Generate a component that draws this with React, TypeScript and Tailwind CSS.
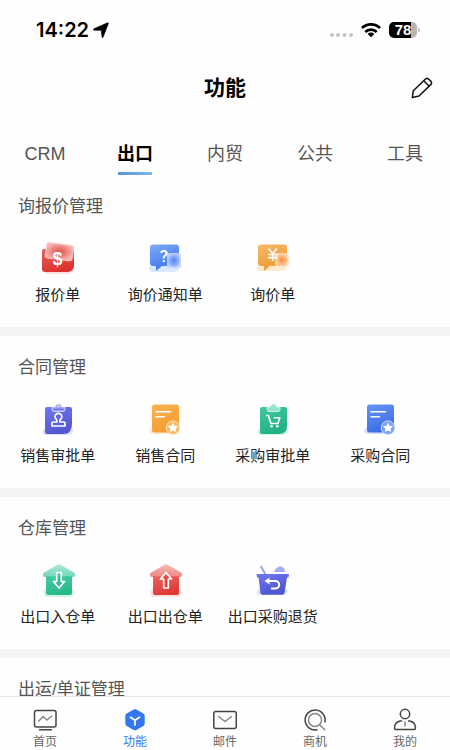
import { useState, type ReactNode } from "react";

interface Feature {
  label: string;
  icon: ReactNode;
}

interface FeatureGroup {
  title: string;
  features: Feature[];
}

const TABS = ["CRM", "出口", "内贸", "公共", "工具"];

function FeatureSvg({ children }: { children: ReactNode }) {
  return (
    <svg viewBox="0 0 36 36" className="size-9" aria-hidden="true">
      {children}
    </svg>
  );
}

function Gradient({ id, from, to }: { id: string; from: string; to: string }) {
  return (
    <linearGradient id={id} x1="0" y1="0" x2="0.4" y2="1">
      <stop offset="0" stopColor={from} />
      <stop offset="1" stopColor={to} />
    </linearGradient>
  );
}

function QuoteIcon() {
  return (
    <FeatureSvg>
      <defs>
        <Gradient id="quote" from="#e2605c" to="#dc3331" />
        <radialGradient id="quote-glass">
          <stop offset="0" stopColor="#e4504d" />
          <stop offset="0.5" stopColor="#ec7f7b" />
          <stop offset="1" stopColor="#f8b9b5" />
        </radialGradient>
      </defs>
      <path d="M5 27h27c3 0 1 6-5 6H8c-4 0-6-6-3-6Z" fill="#fbdedb" />
      <path d="M4 8h27q3 0 3 3v13q0 7-7 7H5q-3 0-3-3V10q0-2 2-2Z" fill="url(#quote)" />
      <path
        d="M9 1.6 31.5 4.5q2.5.4 2.2 2.8l-1.4 10.4q-.4 2.6-3 2.3L7 17q-2.4-.4-2-2.6L6.8 3.3Q7.1 1.4 9 1.6Z"
        fill="url(#quote-glass)"
        stroke="#f9c8c4"
        strokeWidth="0.8"
      />
      <text x="17.5" y="24" textAnchor="middle" fontSize="18" fontWeight="700" fill="#fff" className="font-['Liberation_Sans',sans-serif]">
        $
      </text>
    </FeatureSvg>
  );
}

function InquiryNoticeIcon() {
  return (
    <FeatureSvg>
      <defs>
        <Gradient id="notice" from="#82abf4" to="#3f77ec" />
        <radialGradient id="notice-glass">
          <stop offset="0" stopColor="#5385f3" />
          <stop offset="0.5" stopColor="#84a8f8" />
          <stop offset="1" stopColor="#c4d6fd" />
        </radialGradient>
      </defs>
      <path d="M5 24h27v3c0 3-3 4-6 4H6c-6 0-5-6-1-7Z" fill="#dbe7fd" />
      <path d="M6 3.5h23q3 0 3 3V22q0 3-3 3H15l-6 5V25H6q-3 0-3-3V6.500q0-3 3-3Z" fill="url(#notice)" />
      <rect x="20" y="12" width="14" height="15" rx="2" fill="url(#notice-glass)" fillOpacity="0.9" />
      <text x="17" y="21" textAnchor="middle" fontSize="17" fontWeight="500" fill="#fff" className="font-['Roboto',sans-serif]">
        ?
      </text>
    </FeatureSvg>
  );
}

function InquiryIcon() {
  return (
    <FeatureSvg>
      <defs>
        <Gradient id="inquiry" from="#f6b868" to="#ee9a32" />
        <radialGradient id="inquiry-glass">
          <stop offset="0" stopColor="#f58c3c" />
          <stop offset="0.5" stopColor="#f9b277" />
          <stop offset="1" stopColor="#fde0c0" stopOpacity="0.8" />
        </radialGradient>
      </defs>
      <path d="M4 24h27v3c0 2-3 3-6 3H5c-4 0-4-5-1-6Z" fill="#fdebd0" />
      <path d="M6 3.5h23q3 0 3 3V22q0 3-3 3H15l-6 5V25H6q-3 0-3-3V6.500q0-3 3-3Z" fill="url(#inquiry)" />
      <rect x="20" y="12" width="14" height="14" rx="3" fill="url(#inquiry-glass)" />
      <path d="m13.500 7.500 4.200 5 4.200-5M17.700 12.500v7.500M13 13.500h9.500M13 16.700h9.500" fill="none" stroke="#fff" strokeWidth="1.700" />
    </FeatureSvg>
  );
}

function StampClipboardIcon() {
  return (
    <FeatureSvg>
      <defs>
        <Gradient id="stamp" from="#6f78ee" to="#5457cf" />
      </defs>
      <path d="M4 27h28c3 1 0 6-4 6H6c-4 0-5-5-2-6Z" fill="#dfe1fa" />
      <path d="M7 5h23q2 0 2 2v15q0 10-9 10H7q-2 0-2-2V7q0-2 2-2Z" fill="url(#stamp)" />
      <path d="M12 5h3.500q.5-3 3-3t3 3H25v2.500q0 2-2 2h-9q-2 0-2-2Z" fill="#9aa0f2" stroke="#d3d6fb" strokeWidth="0.9" />
      <path d="M13.500 7.300h10" stroke="#6a70e2" strokeWidth="1.200" />
      <circle cx="18.500" cy="4.300" r="0.900" fill="#fff" />
      <path
        d="M16.800 20v-1.800c0-1-1.800-1.500-1.800-3.400a3.400 3.400 0 0 1 6.800 0c0 1.900-1.800 2.400-1.800 3.400V20h4q1 0 1 1v3H12v-3q0-1 1-1Z"
        fill="none"
        stroke="#fff"
        strokeWidth="1.700"
      />
    </FeatureSvg>
  );
}

function ContractIcon({ id, from, to, glow, badge }: { id: string; from: string; to: string; glow: string; badge: string }) {
  return (
    <FeatureSvg>
      <defs>
        <Gradient id={id} from={from} to={to} />
      </defs>
      <path d="M4 26h28v3c0 2-2 3-4 3H6c-5 0-5-5-2-6Z" fill={glow} />
      <rect x="5" y="2.500" width="27" height="28" rx="2.500" fill={`url(#${id})`} />
      <path d="M9 9.700h14.500M9 14.700h8.500" stroke="#fff" strokeWidth="1.500" strokeLinecap="round" />
      <circle cx="26" cy="25.700" r="6.800" fill={badge} stroke={glow} strokeWidth="0.900" />
      <path d="m26 20.800 1.600 3 3.400.5-2.500 2.400.6 3.400-3.100-1.600-3.100 1.600.6-3.400-2.500-2.400 3.400-.5Z" fill="#fff" />
    </FeatureSvg>
  );
}

function CartClipboardIcon() {
  return (
    <FeatureSvg>
      <defs>
        <Gradient id="cart" from="#43c7a0" to="#22b184" />
      </defs>
      <path d="M4 27h28c3 1 0 6-4 6H6c-4 0-5-5-2-6Z" fill="#d3f6ea" />
      <path d="M7 5h23q2 0 2 2v17q0 8-8 8H7q-2 0-2-2V7q0-2 2-2Z" fill="url(#cart)" />
      <path d="M12 5h3.500q.5-3 3-3t3 3H25v2.500q0 2-2 2h-9q-2 0-2-2Z" fill="#93e2ca" stroke="#d5f7ed" strokeWidth="0.9" />
      <path d="M11 13.500h2.500l2.300 8h7.200l1.800-5.800h-6" fill="none" stroke="#fff" strokeWidth="1.600" strokeLinejoin="round" />
      <circle cx="16.500" cy="24.300" r="1.300" fill="#fff" />
      <circle cx="22.300" cy="24.300" r="1.300" fill="#fff" />
    </FeatureSvg>
  );
}

function WarehouseIcon({ id, from, to, roof, glow, out }: { id: string; from: string; to: string; roof: string; glow: string; out?: boolean }) {
  return (
    <FeatureSvg>
      <defs>
        <Gradient id={id} from={from} to={to} />
        <linearGradient id={`${id}-roof`} x1="0" y1="0" x2="0" y2="1">
          <stop offset="0" stopColor={roof} />
          <stop offset="1" stopColor={from} stopOpacity="0.75" />
        </linearGradient>
      </defs>
      <path d="M5 26h28c2 1 2 8-3 8H7c-4 0-5-6-2-8Z" fill={glow} />
      <path d="M6 13h26v17q0 2-2 2H8q-2 0-2-2Z" fill={`url(#${id})`} />
      <path d="M17.500 1.800q1.500-1 3 0L34 9.500q1.200.8 1.200 2.500 0 2-2 2H4.800q-2 0-2-2 0-1.700 1.200-2.500Z" fill={`url(#${id}-roof)`} />
      <path
        d={out ? "M19 9.500 24.500 16h-3.200v9h-4.600v-9h-3.200Z" : "M16.700 9.500h4.600v9h3.200L19 25l-5.500-6.500h3.200Z"}
        fill={to}
        fillOpacity="0.55"
        stroke="#fff"
        strokeWidth="1.700"
        strokeLinejoin="round"
      />
    </FeatureSvg>
  );
}

function ReturnBasketIcon() {
  return (
    <FeatureSvg>
      <defs>
        <Gradient id="basket" from="#6d78ee" to="#5055d2" />
      </defs>
      <path d="M4 26h27c3 1 1 6-3 6H5c-4 0-4-5-1-6Z" fill="#dcdffa" />
      <path d="m6 3.500 4 7" stroke="#9aa1f2" strokeWidth="2" strokeLinecap="round" />
      <path d="M19 9c1-3 3.500-5.500 6.500-5.500s4.500 2.500 4.500 5.500Z" fill="#a5abf4" />
      <path d="M1.500 11h32.500l-.5 3.500H32L29.500 30q-.3 1.800-2 1.800h-20q-1.700 0-2-1.800L3.500 14.500H2Z" fill="url(#basket)" />
      <path d="M12 18h8.500a3.700 3.700 0 0 1 0 7.400H16" fill="none" stroke="#fff" strokeWidth="2" />
      <path d="m9.500 18 5-3.500v7Z" fill="#fff" />
    </FeatureSvg>
  );
}

const GROUPS: FeatureGroup[] = [
  {
    title: "询报价管理",
    features: [
      { label: "报价单", icon: <QuoteIcon /> },
      { label: "询价通知单", icon: <InquiryNoticeIcon /> },
      { label: "询价单", icon: <InquiryIcon /> },
    ],
  },
  {
    title: "合同管理",
    features: [
      { label: "销售审批单", icon: <StampClipboardIcon /> },
      { label: "销售合同", icon: <ContractIcon id="sales" from="#f9b452" to="#f59c2f" glow="#fdeacb" badge="#f8bd6c" /> },
      { label: "采购审批单", icon: <CartClipboardIcon /> },
      { label: "采购合同", icon: <ContractIcon id="purchase" from="#6795f3" to="#3d6de6" glow="#d6e3fd" badge="#7da2f4" /> },
    ],
  },
  {
    title: "仓库管理",
    features: [
      { label: "出口入仓单", icon: <WarehouseIcon id="inbound" from="#4acba6" to="#27b88b" roof="#b0ebd9" glow="#d3f6ea" /> },
      { label: "出口出仓单", icon: <WarehouseIcon id="outbound" from="#e96661" to="#df3835" roof="#f7bfbb" glow="#fbdedc" out /> },
      { label: "出口采购退货", icon: <ReturnBasketIcon /> },
    ],
  },
  { title: "出运/单证管理", features: [] },
];

const NAV_ITEMS = [
  {
    label: "首页",
    icon: (
      <>
        <rect x="1.500" y="2.500" width="21.500" height="16.500" rx="2" />
        <path d="M6.500 21.700h12" />
        <path d="m5.700 13 4.600-4.500 3.700 3.500 4.700-4" stroke="#888" />
      </>
    ),
  },
  {
    label: "功能",
    icon: (
      <>
        <path
          d="M10.700 1.400q1.300-.8 2.600 0l7 4q1.400.8 1.400 2.400v7.700q0 1.600-1.400 2.400l-7 4q-1.300.8-2.600 0l-7-4q-1.400-.8-1.400-2.400V7.800q0-1.600 1.400-2.400Z"
          fill="#3478ef"
          stroke="none"
        />
        <path d="m7.500 9.300 4.500 3 4.500-3M12 12.300V17" stroke="#fff" strokeWidth="1.700" />
      </>
    ),
  },
  {
    label: "邮件",
    icon: (
      <>
        <rect x="0.800" y="3.500" width="22.500" height="17" rx="2" />
        <path d="m5.500 8.500 6.500 5 6.500-5" stroke="#888" />
      </>
    ),
  },
  {
    label: "商机",
    icon: (
      <>
        <path d="M14 21.800A10 10 0 1 1 21.900 14" />
        <circle cx="12" cy="12" r="6.500" stroke="#888" />
        <path d="m16.700 16.700 5 5" stroke="#888" />
      </>
    ),
  },
  {
    label: "我的",
    icon: (
      <>
        <circle cx="12" cy="6" r="4.700" />
        <path d="M8.500 13H7q-5.500 1.500-5.500 7 0 1.500 1.500 1.500h18q1.500 0 1.500-1.500 0-5.500-5.500-7h-1.500" />
        <path d="M12 14v4" stroke="#888" />
      </>
    ),
  },
];

function StatusBar() {
  return (
    <div className="flex h-15 shrink-0 items-center justify-between pl-9 pr-7.5">
      <div className="flex items-center gap-1">
        <span className="font-['Inter',sans-serif] text-xl font-semibold leading-6">14:22</span>
        <svg viewBox="0 0 16 16" className="size-4" aria-hidden="true">
          <path d="M14.500.8q1.200-.2.800.9L10.200 15q-.8 1.300-1.200 0L8.200 8.300 1 8.200Q-.4 7.700.9 6.800Z" fill="#000" stroke="#000" strokeWidth="0.600" />
        </svg>
      </div>
      <div className="flex items-center gap-2">
        <svg viewBox="0 0 24 16" className="h-4 w-6" fill="#c4c4c4" aria-hidden="true">
          <circle cx="3" cy="13" r="2" />
          <circle cx="9" cy="13" r="2" />
          <circle cx="15.500" cy="13" r="2" />
          <circle cx="22" cy="13" r="2" />
        </svg>
        <svg viewBox="0 0 20 16" className="h-4 w-5" fill="none" stroke="#000" strokeWidth="2.800" aria-hidden="true">
          <path d="M1 6a13 13 0 0 1 18 0M4.300 10a8 8 0 0 1 11.400 0" />
          <path d="m10 15.300-3.300-3.300a4.600 4.600 0 0 1 6.600 0Z" fill="#000" stroke="none" />
        </svg>
        <div className="flex items-center gap-px">
          <div className="flex h-4 w-7 items-center justify-center rounded-[5px] bg-linear-to-r from-black from-80% to-[#b5b5b5] to-80% font-['Liberation_Sans',sans-serif] text-[15px] font-bold leading-4 text-white">
            78
          </div>
          <div className="h-1 w-0.5 rounded-r bg-[#b5b5b5]" />
        </div>
      </div>
    </div>
  );
}

export default function App() {
  const [activeTab, setActiveTab] = useState("出口");
  const [activeNav, setActiveNav] = useState("功能");

  return (
    <div className="flex h-screen flex-col bg-[#fefefe] font-['Liberation_Sans','Noto_Sans_CJK_SC',sans-serif] text-black">
      <StatusBar />

      <header className="grid h-14 shrink-0 grid-cols-[1fr_auto_1fr] items-center px-4">
        <h1 className="col-start-2 text-[21px] font-bold leading-7">功能</h1>
        <button type="button" aria-label="编辑" className="justify-self-end">
          <svg viewBox="0 0 24 24" className="size-6" fill="none" stroke="#111" strokeWidth="1.500" strokeLinejoin="round" aria-hidden="true">
            <path d="m2.300 21.500 1-6.700L15.500 3q1.500-1.300 3 0L21 5.400q1.300 1.500 0 3L9 20Z" />
            <path d="m13.700 4.800 5.500 5.500" />
          </svg>
        </button>
      </header>

      <div role="tablist" className="grid h-[59px] shrink-0 grid-cols-5">
        {TABS.map((tab) => (
          <button
            key={tab}
            type="button"
            role="tab"
            aria-selected={tab === activeTab}
            onClick={() => setActiveTab(tab)}
            className="flex flex-col items-center justify-end gap-1.5"
          >
            <span className={`text-lg leading-6 ${tab === activeTab ? "font-bold text-black" : "text-[#555]"}`}>{tab}</span>
            <span className={`h-[3px] w-8.5 ${tab === activeTab ? "bg-linear-to-r from-[#5b93d6] to-[#80b5ee]" : ""}`} />
          </button>
        ))}
      </div>

      <main className="min-h-0 flex-1 overflow-y-auto [scrollbar-width:none]">
        {GROUPS.map((group) => (
          <section key={group.title} className="border-b-9 border-[#f4f4f4] pb-5 pt-5">
            <h2 className="px-4.5 text-[17px] leading-6 text-[#555]">{group.title}</h2>
            <div className="mt-5.5 grid grid-cols-4 pl-1 pr-4">
              {group.features.map((feature) => (
                <button key={feature.label} type="button" className="flex flex-col items-center gap-1.5">
                  {feature.icon}
                  <span className="whitespace-nowrap text-[15px] leading-6 text-[#222]">{feature.label}</span>
                </button>
              ))}
            </div>
          </section>
        ))}
      </main>

      <nav className="grid shrink-0 grid-cols-5 border-t border-[#e6e6e6] pt-[11px]">
        {NAV_ITEMS.map((item) => (
          <button key={item.label} type="button" onClick={() => setActiveNav(item.label)} className="flex flex-col items-center gap-0.5">
            <svg viewBox="0 0 24 24" className="size-6" fill="none" stroke="#444" strokeWidth="1.500" strokeLinecap="round" strokeLinejoin="round" aria-hidden="true">
              {item.icon}
            </svg>
            <span className={`text-xs leading-4 ${item.label === activeNav ? "text-[#3478ef]" : "text-[#666]"}`}>{item.label}</span>
          </button>
        ))}
      </nav>
    </div>
  );
}
